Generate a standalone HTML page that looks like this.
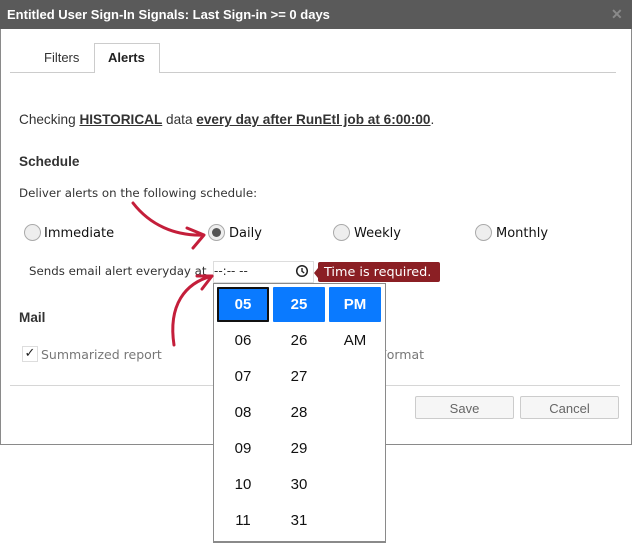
<!DOCTYPE html>
<html><head><meta charset="utf-8"><style>
body{margin:0;width:632px;height:543px;background:#fff;position:relative;overflow:hidden;font-family:"DejaVu Sans","Liberation Sans",sans-serif;font-size:11.5px;color:#333}
.a{position:absolute;white-space:nowrap}
.dlg{position:absolute;left:0;top:0;width:630px;height:444px;border:1px solid #8a8a8a;border-top:none;background:#fff}
.hd{position:absolute;left:0;top:0;width:632px;height:29px;background:#5a5a5a;color:#fff;font:bold 13px "Liberation Sans",sans-serif}
.ls{font-family:"Liberation Sans",sans-serif;font-size:13.6px}
.r{position:absolute;width:17px;height:17px;border:1px solid #aaa;border-radius:50%;background:#eee;box-sizing:border-box}
.cell{position:absolute;width:52px;height:35px;font:15px "Liberation Sans",sans-serif;color:#111;text-align:center;line-height:35px}
.b{background:#0a7aff;color:#fff;font-weight:bold;border-radius:1px}
.btn{position:absolute;top:396px;width:99px;height:23px;border:1px solid #ccc;border-radius:2px;background:#f6f6f6;color:#666;font:13px "Liberation Sans",sans-serif;text-align:center;line-height:23px;box-sizing:border-box}
</style></head><body>
<div class="dlg"></div>
<div class="hd"><span class="a" style="left:7px;top:7px">Entitled User Sign-In Signals: Last Sign-in &gt;= 0 days</span><span class="a" style="left:611px;top:6px;color:#8a8a8a;font-size:14px">✕</span></div>
<div class="a" style="left:10px;top:72px;width:606px;height:1px;background:#ccc"></div>
<div class="a" style="left:94px;top:43px;width:66px;height:30px;border:1px solid #ccc;border-bottom:none;background:#fff;box-sizing:border-box"></div>
<div class="a ls" style="left:44px;top:50px;color:#333;font-size:13px">Filters</div>
<div class="a ls" style="left:108px;top:50px;font-weight:bold;color:#222;font-size:13px">Alerts</div>
<div class="a ls" style="left:19px;top:112px">Checking <b><u>HISTORICAL</u></b> data <b><u>every day after RunEtl job at 6:00:00</u></b>.</div>
<div class="a ls" style="left:19px;top:154px;font-weight:bold">Schedule</div>
<div class="a" style="left:19px;top:186px;font-size:11.8px">Deliver alerts on the following schedule:</div>
<div class="r" style="left:24px;top:224px"></div><div class="a" style="left:44px;top:226px;font-size:13px;color:#111">Immediate</div>
<div class="r" style="left:208px;top:224px"></div><div class="a" style="left:212px;top:228px;width:9px;height:9px;border-radius:50%;background:#555"></div><div class="a" style="left:229px;top:226px;font-size:13px;color:#111">Daily</div>
<div class="r" style="left:333px;top:224px"></div><div class="a" style="left:354px;top:226px;font-size:13px;color:#111">Weekly</div>
<div class="r" style="left:475px;top:224px"></div><div class="a" style="left:496px;top:226px;font-size:13px;color:#111">Monthly</div>
<div class="a" style="left:29px;top:264px;font-size:11.8px">Sends email alert everyday at</div>
<div class="a" style="left:213px;top:261px;width:101px;height:22px;border:1px solid #ddd;box-sizing:border-box"></div>
<div class="a" style="left:214px;top:264px;font-size:12px;color:#333">--:-- --</div>
<svg class="a" style="left:295px;top:264px" width="14" height="14"><circle cx="7" cy="7" r="5.3" fill="none" stroke="#222" stroke-width="1.5"/><path d="M7 4V7.3L9.2 9" fill="none" stroke="#222" stroke-width="1.4"/></svg>
<div class="a" style="left:318px;top:262px;width:122px;height:20px;background:#8b1f24;border-radius:2px"></div>
<div class="a" style="left:314px;top:268px;border:5px solid transparent;border-right:4px solid #8b1f24;border-left:none"></div>
<div class="a" style="left:324px;top:265px;color:#fff;font-size:12.8px">Time is required.</div>
<div class="a ls" style="left:19px;top:310px;font-weight:bold">Mail</div>
<div class="a" style="left:22px;top:346px;width:16px;height:16px;border:1px solid #ddd;box-sizing:border-box;font-size:13px;line-height:14px;text-align:center;color:#222">✓</div>
<div class="a" style="left:41px;top:347px;color:#777;font-size:12.5px">Summarized report</div>
<div class="a" style="left:380px;top:347px;color:#777;font-size:12.5px">Format</div>
<div class="a" style="left:10px;top:385px;width:610px;height:1px;background:#d6d6d6"></div>
<div class="btn" style="left:415px">Save</div>
<div class="btn" style="left:520px">Cancel</div>
<div class="a" style="left:213px;top:283px;width:173px;height:260px;border:1px solid #8a8a8a;border-bottom:2px solid #8a8a8a;background:#fff;box-sizing:border-box"></div>
<div class="cell b" style="left:217px;top:287px;box-shadow:inset 0 0 0 2px #111">05</div>
<div class="cell b" style="left:273px;top:287px">25</div>
<div class="cell b" style="left:329px;top:287px">PM</div>
<div class="cell" style="left:217px;top:323px">06</div><div class="cell" style="left:273px;top:323px">26</div><div class="cell" style="left:329px;top:323px">AM</div>
<div class="cell" style="left:217px;top:359px">07</div><div class="cell" style="left:273px;top:359px">27</div>
<div class="cell" style="left:217px;top:395px">08</div><div class="cell" style="left:273px;top:395px">28</div>
<div class="cell" style="left:217px;top:431px">09</div><div class="cell" style="left:273px;top:431px">29</div>
<div class="cell" style="left:217px;top:467px">10</div><div class="cell" style="left:273px;top:467px">30</div>
<div class="cell" style="left:217px;top:503px">11</div><div class="cell" style="left:273px;top:503px">31</div>
<svg class="a" style="left:0;top:0" width="632" height="543" fill="none" stroke="#c41e3a" stroke-width="3" stroke-linecap="round" stroke-linejoin="round">
<path d="M133 203C150 225 175 236 203 235"/><path d="M187 228L204 235L193 248"/>
<path d="M174 345C168 305 185 283 212 276"/><path d="M197 276L212 276L202 289"/>
</svg>
</body></html>
